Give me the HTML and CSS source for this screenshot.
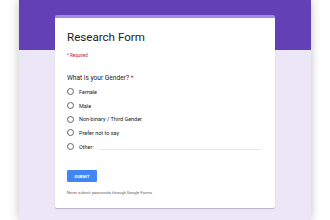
FILE: index.html
```html
<!DOCTYPE html>
<html>
<head>
<meta charset="utf-8">
<link rel="stylesheet" href="styles.css">
</head>
<body>
<div class="window">
  <div class="card">
    <h1 class="title">Research Form</h1>
    <div class="required">* Required</div>
    <div class="question">What is your Gender? <span class="star">*</span></div>
    <div class="options">
      <div class="option"><span class="radio"></span><span class="label">Female</span></div>
      <div class="option"><span class="radio"></span><span class="label">Male</span></div>
      <div class="option"><span class="radio"></span><span class="label">Non-binary / Third Gender</span></div>
      <div class="option"><span class="radio"></span><span class="label">Prefer not to say</span></div>
      <div class="option"><span class="radio"></span><span class="label">Other:</span><span class="other-line"></span></div>
    </div>
    <button class="submit">SUBMIT</button>
    <div class="footer">Never submit passwords through Google Forms.</div>
  </div>
</div>
</body>
</html>
```

FILE: styles.css
```css
html, body {
  margin: 0;
  padding: 0;
  background: #ffffff;
  width: 330px;
  height: 220px;
  overflow: hidden;
  font-family: Roboto, "Liberation Sans", sans-serif;
}
.window {
  margin: 0 19px;
  width: 292px;
  height: 220px;
  background: linear-gradient(#6440b6 0, #6440b6 50px, #ebe7f6 50px);
  box-shadow: 0 0 9px rgba(0,0,0,0.25);
  padding-top: 15px;
  box-sizing: border-box;
}
.card {
  margin-left: 36px;
  width: 220px;
  height: 193px;
  box-sizing: border-box;
  background: #fff;
  border-top: 3px solid #a48ae6;
  border-radius: 2px;
  box-shadow: 0 1px 1px rgba(0,0,0,0.22);
  padding: 11px 12px 0 12px;
  display: flex;
  flex-direction: column;
}
.title {
  margin: 0;
  font-size: 11.6px;
  line-height: 16px;
  font-weight: 400;
  color: #202124;
}
.required {
  margin-top: 8px;
  font-size: 4.5px;
  line-height: 6px;
  color: #c5221f;
}
.question {
  margin-top: 15px;
  font-size: 6.6px;
  line-height: 9px;
  color: #202124;
}
.star { color: #d93025; }
.options {
  margin-top: 2px;
  display: flex;
  flex-direction: column;
}
.option {
  height: 13.7px;
  display: flex;
  align-items: center;
}
.radio {
  width: 5px;
  height: 5px;
  border: 0.9px solid #5f6368;
  border-radius: 50%;
}
.label {
  margin-left: 5px;
  font-size: 5.5px;
  color: #202124;
}
.other-line {
  flex: 1;
  margin-left: 6px;
  margin-right: 3px;
  align-self: flex-end;
  margin-bottom: 3px;
  border-bottom: 1px solid #e6e6e6;
}
.submit {
  margin-top: 17px;
  width: 30px;
  height: 12px;
  padding: 0;
  border: none;
  border-radius: 1px;
  background: #4285f4;
  color: #fff;
  font-family: Roboto, "Liberation Sans", sans-serif;
  font-size: 4px;
  font-weight: 700;
  letter-spacing: 0.1px;
}
.footer {
  margin-top: 8px;
  font-size: 4px;
  line-height: 5px;
  color: #5f6368;
}
```
